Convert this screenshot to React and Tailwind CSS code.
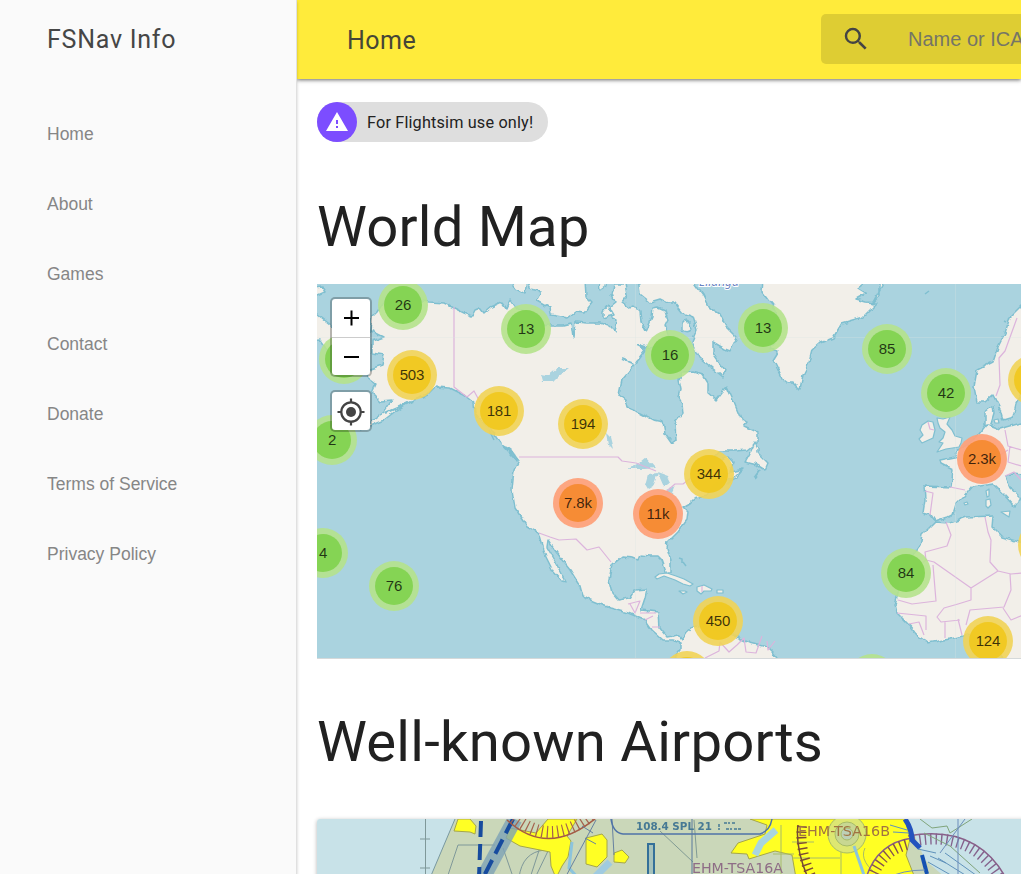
import React from "react";

const NAV = ["Home", "About", "Games", "Contact", "Donate", "Terms of Service", "Privacy Policy"];

const LAND = [
  // North America
  "M372 317 L377 312 L382 304 L400 298 L429 302 L444 303 L454 308 L464 313 L472 316 L475 310 L480 308 L484 313 L491 307 L502 302 L507 309 L511 300 L517 309 L530 314 L536 318 L542 326 L550 325 L563 325 L571 323 L573 338 L575 322 L587 323 L600 323 L611 327 L615 331 L617 320 L612 318 L610 306 L615 302 L612 294 L614 284 L625 284 L627 295 L622 302 L630 308 L634 306 L640 312 L641 322 L646 331 L652 317 L653 308 L658 307 L665 310 L668 320 L665 326 L670 340 L651 348 L640 345 L645 351 L633 367 L622 380 L619 395 L626 400 L628 408 L640 413 L653 420 L663 422 L665 433 L672 443 L676 440 L675 423 L683 413 L682 404 L678 397 L680 390 L678 380 L683 373 L693 372 L703 375 L708 383 L708 393 L716 400 L722 392 L727 387 L733 400 L740 417 L747 422 L744 426 L757 432 L757 442 L747 450 L735 451 L720 451 L708 466 L728 457 L733 462 L730 472 L744 469 L736 477 L727 480 L714 485 L707 495 L695 498 L690 503 L683 507 L688 512 L687 520 L678 532 L668 542 L667 548 L671 560 L671 574 L667 574 L662 560 L658 556 L650 556 L640 555 L638 560 L633 558 L622 557 L612 565 L609 580 L612 593 L618 600 L630 598 L635 590 L647 589 L645 598 L641 610 L658 612 L659 627 L667 637 L678 635 L682 640 L687 632 L693 627 L715 630 L737 637 L750 643 L767 647 L773 653 L780 662 L670 662 L680 650 L680 643 L672 640 L663 640 L652 630 L645 620 L628 613 L610 608 L583 597 L580 586 L570 570 L562 560 L554 549 L548 540 L547 547 L555 561 L560 571 L566 582 L562 581 L553 571 L548 561 L546 557 L539 533 L527 526 L515 508 L512 490 L514 470 L519 460 L510 450 L500 443 L490 428 L482 422 L475 413 L474 403 L464 395 L450 388 L435 387 L427 395 L414 400 L405 405 L397 410 L384 420 L360 430 L384 412 L392 400 L380 401 L372 393 L376 384 L367 377 L370 369 L382 365 L384 355 L372 353 L372 341 L384 337 L370 330Z",
  // Chukotka
  "M310 310 L317 314 L326 321 L336 329 L341 345 L327 350 L320 340 L310 341Z", "M314 288 L322 287 L325 292 L318 295 L314 294Z",
  // Greenland
  "M763 280 L762 292 L768 300 L776 310 L780 325 L775 340 L770 350 L778 352 L773 360 L783 380 L787 383 L794 383 L800 389 L803 375 L809 363 L812 350 L820 343 L833 338 L842 323 L863 317 L877 303 L866 302 L855 299 L866 293 L858 288 L868 280 L879 280 L879 296 L872 304 L885 280Z",
  // Baffin
  "M638 280 L640 294 L650 302 L660 299 L668 303 L675 303 L683 313 L693 317 L697 330 L692 342 L700 358 L712 368 L723 377 L725 370 L713 353 L713 342 L725 349 L730 351 L737 337 L727 327 L720 314 L709 307 L703 295 L692 280Z",
  "M682 323 q4 -6 8 0 l1 6 q-4 5 -9 1Z",
  // Victoria and neighbours
  "M527 280 L531 289 L541 291 L536 300 L550 308 L551 315 L567 318 L575 312 L583 313 L592 302 L586 296 L585 280Z",
  "M510 280 L516 289 L525 294 L527 280Z", "M603 311 L608 305 L614 315 L603 318Z", "M599 280 L600 290 L606 286 L607 280Z",
  // Newfoundland
  "M745 462 L750 453 L755 442 L758 448 L758 453 L768 463 L765 470 L757 465Z",
  "M734 477 L742 469 L737 478 L727 484Z",
  // Scandinavia and Denmark
  "M1023 304 L1010 317 L1005 333 L998 347 L993 362 L977 370 L974 387 L977 402 L985 402 L993 395 L1000 409 L1003 420 L1013 417 L1016 404 L1023 392Z",
  "M985 425 L985 412 L993 406 L994 414 L991 424Z",
  // Europe
  "M940 460 L955 457 L958 450 L968 443 L979 434 L987 424 L1000 429 L1021 423 L1025 423 L1025 475 L1011 474 L1005 476 L1010 487 L1021 497 L1015 507 L1003 494 L993 484 L980 486 L971 487 L964 496 L956 504 L953 514 L947 517 L935 521 L931 515 L923 513 L925 500 L924 486 L951 487 L953 470 L941 464Z",
  // Africa
  "M935 522 L950 523 L967 517 L993 516 L992 527 L1002 537 L1023 543 L1023 662 L1004 662 L1000 653 L985 640 L967 635 L950 639 L928 643 L917 635 L908 624 L897 613 L895 604 L898 594 L898 578 L908 562 L920 545 L922 535Z",
];

// Small islands are drawn with their own detailed outlines
const ISLANDS = [
  "M655 577 L659 574 L667 573 L676 576 L684 579 L693 584 L690 586 L683 584 L675 580 L664 576 L657 579Z",
  "M697 587 L704 585 L712 589 L711 591 L704 591 L701 594 L697 591Z",
  "M679 591 h6 l2 1 l-4 2Z", "M717 590 h6 v3 h-6Z",
  "M937 418 L943 419 L950 417 L947 424 L952 430 L955 436 L962 438 L961 443 L959 447 L946 449 L937 452 L943 443 L939 442 L943 438 L945 432 L940 428 L938 423Z",
  "M922 425 L928 421 L933 422 L935 430 L933 438 L922 443 L919 439 L923 435 L920 430Z",
  "M986 500 l4 -1 l1 6 l-3 3 l-2 -2Z", "M986 491 l3 -2 l0 7 l-2 1Z", "M1001 512 l9 -1 l-1 6Z", "M964 503 l3 -1 l1 2 l-3 1Z",
  "M994 420 l4 -1 l1 4 l-4 0Z",
];

const WATER = [
  "M628 469 L640 463 L646 458 L655 468 L645 469Z", "M648 474 L658 473 L653 487 L648 490 L645 485Z", "M657 472 L668 476 L671 482 L664 487 L660 478Z",
  "M663 492 L675 486 L672 493Z", "M606 433 L610 437 L613 449 L608 444Z", "M541 374 L548 375 L557 368 L569 368 L558 376 L553 381 L543 381Z", "M672 414 l4 0 l-1 7 l-3 -3Z",
];

const BORDERS =
  "M454 307 V387 L467 397 L474 391 L480 402 M519 457 H618 L622 461 L636 463 L656 471 M667 491 L675 484 L683 484 L692 477 M539 533 L550 537 L559 540 L576 539 L587 550 L599 547 L611 562 M628 604 L640 601 L635 613 L630 604 M640 613 L656 613 M645 620 L653 616 M652 627 L660 627 M705 658 L719 651 L720 642 L729 652 L737 645 L744 638 L746 652 L756 653 L762 636 M767 641 L768 650 L775 641 M946 522 L951 535 L947 546 L925 552 L926 560 L934 562 L971 588 L998 571 L1011 574 L1023 573 M933 565 L936 601 L912 604 L898 600 M926 560 L913 570 M985 517 L988 532 L991 540 L990 562 L998 571 M971 588 L971 600 L958 604 L944 608 L937 617 L941 622 L960 620 M1010 574 L1011 590 L1004 607 L970 610 L966 625 M945 622 L945 638 M958 619 L962 635 M897 613 L926 616 L926 630 M909 624 L919 622 L924 635 M1003 608 L1011 620 L1023 615 M950 487 L965 490 M925 491 L933 493 L930 515 M1017 318 L1005 351 L999 358 L1000 385 L996 396 M1005 430 L1008 446 L1021 450 M1000 455 L1008 450 M1010 446 L1008 462 L1021 466 M1005 476 L1014 472 L1021 480 M928 422 L930 429 L934 430 M702 586 V592";

const CLUSTERS = [
  [403, 305, "26", "g"], [526, 329, "13", "g"], [670, 355, "16", "g"], [763, 328, "13", "g"], [887, 349, "85", "g"], [946, 393, "42", "g"],
  [344, 359, "", "g"], [332, 440, "2", "g"], [323, 553, "4", "g"], [394, 586, "76", "g"], [906, 573, "84", "g"], [872, 679, "", "g"],
  [412, 375, "503", "y"], [499, 411, "181", "y"], [583, 424, "194", "y"], [709, 474, "344", "y"], [718, 621, "450", "y"],
  [687, 676, "", "y"], [988, 641, "124", "y"], [1033, 380, "", "y"], [1043, 545, "", "y"],
  [578, 503, "7.8k", "o"], [658, 514, "11k", "o"], [982, 459, "2.3k", "o"],
];

const TONES = {
  g: ["bg-[#b5e28c]/90", "bg-[#83d350]/95"],
  y: ["bg-[#f1d357]/90", "bg-[#f0c820]/95"],
  o: ["bg-[#fda17b]/95", "bg-[#f68a30]/95"],
};

function Cluster({ x, y, label, tone }) {
  const [ring, core] = TONES[tone];
  return (
    <div
      className={"absolute flex size-[50px] items-center justify-center rounded-full " + ring}
      style={{ left: x - 317 - 25, top: y - 284 - 25 }}
    >
      <div className={"flex size-[38px] items-center justify-center rounded-full font-['Liberation_Sans',sans-serif] text-[15px] tracking-[-0.1px] text-black/75 " + core}>{label}</div>
    </div>
  );
}

function WorldMap() {
  return (
    <div className="relative mt-[22px] h-[375px] w-[704px] overflow-hidden border-b border-[#d5d9da] bg-[#aad3df]">
      <svg viewBox="317 284 704 374" width="704" height="374" className="block">
        <defs>
          <filter id="coast" x="-5%" y="-5%" width="110%" height="110%" colorInterpolationFilters="sRGB">
            <feTurbulence type="fractalNoise" baseFrequency="0.13" numOctaves="2" seed="4" />
            <feDisplacementMap in="SourceGraphic" scale="5" xChannelSelector="R" yChannelSelector="G" />
          </filter>
        </defs>
        <g filter="url(#coast)">
          {LAND.map((d) => (
            <path key={d} d={d} fill="#f2efe9" stroke="#7fbfd0" strokeWidth="1.5" strokeLinejoin="round" />
          ))}
          {WATER.map((d) => (
            <path key={d} d={d} fill="#aad3df" />
          ))}
          <path d="M622 359 L634 364 M637 344 L647 349 M760 470 l-6 8 M385 413 l28 -12 M503 445 l14 15" stroke="#7fbfd0" strokeWidth="2" fill="none" />
        </g>
        {ISLANDS.map((d) => (
          <path key={d} d={d} fill="#f2efe9" stroke="#7fbfd0" strokeWidth="1.2" strokeLinejoin="round" />
        ))}
        <path d={BORDERS} fill="none" stroke="#dcb4dc" strokeWidth="1.2" strokeLinejoin="round" />
        <path d="M317 337.5 H1021 M635.5 284 V658 M955.5 284 V658" stroke="#d9e3e5" strokeOpacity=".3" fill="none" />
        <path d="M679 558l3 1v4M683 562l3 4M925 294l4 -3M1004 321l2 1M503 446l8 4 7 10M489 430l5 10" stroke="#7fbfd0" strokeWidth="1.5" fill="none" />
        <text x="699" y="286" fontFamily="Noto Sans" fontSize="12" fontStyle="italic" fill="#6b84c2" stroke="#fff" strokeWidth="2" paintOrder="stroke">Ellanga</text>
      </svg>
      {CLUSTERS.map(([x, y, label, tone]) => (
        <Cluster key={x + "-" + y} x={x} y={y} label={label} tone={tone} />
      ))}
      <div className="absolute left-[13px] top-[13px] flex w-[42px] flex-col overflow-hidden rounded-[5px] border-2 border-black/25 bg-white bg-clip-padding">
        <button className="flex h-[39px] items-center justify-center border-b border-[#ccc] pl-px" aria-label="Zoom in">
          <svg width="15" height="16" viewBox="0 0 15 16"><path d="M0 8H15M7.500 0.500V15.500" stroke="#000" strokeWidth="2" /></svg>
        </button>
        <button className="flex h-[37px] items-center justify-center pl-px" aria-label="Zoom out">
          <svg width="15" height="16" viewBox="0 0 15 16"><path d="M0 8H15" stroke="#000" strokeWidth="2" /></svg>
        </button>
      </div>
      <button className="absolute left-[13px] top-[106px] flex h-[42px] w-[42px] items-center justify-center rounded-[5px] border-2 border-black/25 bg-white bg-clip-padding pr-px pt-px" aria-label="Locate">
        <svg width="28" height="28" viewBox="0 0 28 28" fill="none" stroke="#444" strokeWidth="2.200">
          <circle cx="14" cy="14" r="9.700" /><circle cx="14" cy="14" r="5" fill="#444" stroke="none" />
          <path d="M14 0.500V5M14 23V27.500M0.500 14H5M23 14H27.500" />
        </svg>
      </button>
    </div>
  );
}

function AirportChart() {
  return (
    <div className="mt-[46px] h-[220px] w-[760px] overflow-hidden rounded-[3px] shadow-[0_1px_4px_rgba(0,0,0,0.3)]">
      <svg viewBox="317 819 760 220" width="760" height="220" className="block blur-[0.5px]">
        <rect x="317" y="819" width="760" height="220" fill="#cad7b9" />
        <path d="M317 819H455L430 878H317Z M908 819H1077V890H960L925 860Z" fill="#c8e2e8" />
        <path d="M455 819 L430 878" stroke="#7898a0" fill="none" />
        <path d="M425.500 819V878 M420 839h10 M420 868h10 M447 878L458 845H495 M503 848L512 874 M519 878Q522 852 545 850 M549 820L530 878 M562 822L535 878" stroke="#7f9899" fill="none" />
        <g fill="#ffff24" stroke="#a5a64a" strokeWidth="1">
          <path d="M458 819 L454 831 L470 832 L475 834 L476 826 L470 819Z" />
          <path d="M510 828 L506 838 L520 846 L550 852 L551 866 L556 878 L562 866 L568 857 L571 841 L567 836 L577 819 H548 L536 833Z" />
          <path d="M586 838 L602 834 L607 840 L607 857 L597 867 L586 864Z" />
          <path d="M614 853 L622 850 L629 857 L625 863 L614 862Z" />
          <path d="M750 819 L767 825 L765 834 L738 843 L731 853 L747 854 L749 859 L775 851 L792 855 L796 878 H915 L906 855 L910 839 L905 819Z" />
        </g>
        <g fill="none" stroke="#a7bc68">
          <circle cx="847" cy="834" r="19" fill="#dde772" /><circle cx="847" cy="834" r="12" fill="#c8d792" /><circle cx="847" cy="834" r="6" fill="#bdd0b7" />
          <path d="M865 848 Q858 862 882 878 M792 842 H814 M792 858 H840 M841 852V878 M781 825V878 M773 854H794" />
          <path d="M694 820 L697 858 M660 831 L693 862" stroke="#819b94" />
        </g>
        <g stroke="#8cc4dc" strokeWidth="7" fill="none">
          <path d="M755 855 L761 843 L776 830" stroke="#a9d5df" /><path d="M610 862 L594 878" stroke="#a0cbe0" /><path d="M572 842 L569 868 L578 878" strokeWidth="3" /><path d="M854 846 L865 878" strokeWidth="3" />
        </g>
        <path d="M515 819 L483 878" stroke="#7fa3b6" strokeWidth="15" opacity=".8" />
        <path d="M481 821 L479 878 M513 819 L483 878" stroke="#164b9e" strokeWidth="4" strokeDasharray="16 7" fill="none" />
        <path d="M507 820 Q548 858 596 818" fill="none" stroke="#a45a45" strokeWidth="1.500" />
        <path d="M510 814 Q550 850 593 814" fill="none" stroke="#a4624e" strokeWidth="12" strokeDasharray="1.200 4" />
        <path d="M596 820 L565 878 M612 819 L614 855 M582 826 L593 833 M585 838 L596 844" stroke="#6681a0" fill="none" />
        <path d="M611 819 Q613 833 623 834 H760 Q770 831 772 819" fill="none" stroke="#4f73a8" strokeWidth="1.500" />
        <path d="M648 878V844H654V878" fill="#a6c2bb" stroke="#347099" strokeWidth="2" />
        <path d="M692 819V878" stroke="#58789d" />
        <path d="M798 825 Q795 848 808 878" fill="none" stroke="#714836" strokeWidth="1.500" />
        <path d="M802 826 Q799 850 812 878" fill="none" stroke="#7c4a35" strokeWidth="10" strokeDasharray="1.500 4" />
        <path d="M866 878 Q877 843 912 838 M908 836 Q976 824 1006 878" fill="none" stroke="#895e88" strokeWidth="1.500" />
        <path d="M872 878 Q882 850 909 844" fill="none" stroke="#85534d" strokeWidth="11" strokeDasharray="1.400 4" />
        <path d="M914 841 Q971 830 1000 878" fill="none" stroke="#85638d" strokeWidth="11" strokeDasharray="1.400 4" />
        <path d="M905 819 Q912 829 912 840 L920 848" fill="none" stroke="#2353be" strokeWidth="5" />
        <path d="M922 855 L927 874" fill="none" stroke="#1552b2" strokeWidth="4" />
        <path d="M890 825l17 5M893 832l16 1M918 849l18 4M930 856l16 7M928 862l28 16M938 858l32 20M945 853l35 25" stroke="#6092bb" fill="none" />
        <path d="M920 819 L932 828 L947 826 L950 833 L972 819 M924 833L950 846L980 873" fill="none" stroke="#80a47b" />
        <path d="M958 819V878 M965 819L940 853 M888 878 Q902 870 925 870" fill="none" stroke="#6c8ebb" />
        <g fontFamily="DejaVu Sans, sans-serif">
          <text x="636" y="830" fontSize="11" fontWeight="700" fill="#467994" textLength="76" lengthAdjust="spacingAndGlyphs">108.4 SPL 21</text>
          <path d="M719 824v6M724 823h6M726 829h6M732 823h4M734 829h7" stroke="#467994" strokeWidth="1.500" strokeDasharray="3 1" />
          <text x="798" y="836" fontSize="14" fill="#a17342" textLength="92" lengthAdjust="spacingAndGlyphs">EHM-TSA16B</text>
          <text x="692" y="873" fontSize="14" fill="#8e6d86" textLength="91" lengthAdjust="spacingAndGlyphs">EHM-TSA16A</text>
        </g>
      </svg>
    </div>
  );
}

export default function App() {
  return (
    <div className="flex h-[874px] w-full overflow-hidden bg-white font-['Roboto',sans-serif]">
      <aside className="z-20 flex w-[297px] shrink-0 flex-col border-r border-[#e0e0e0] bg-[#fafafa] shadow-[0_2px_3px_rgba(0,0,0,0.2)]">
        <div className="flex h-20 items-center pl-[47px] text-[25px] tracking-[0.75px] text-[#464646]">FSNav Info</div>
        <nav className="mt-[19px] flex flex-col font-['Liberation_Sans',sans-serif] text-[17.5px] text-[#868686]">
          {NAV.map((item) => (
            <a key={item} className="flex h-[70px] items-center pl-[47px]">{item}</a>
          ))}
        </nav>
      </aside>
      <div className="flex min-w-0 flex-1 flex-col">
        <header className="z-10 flex h-[79px] shrink-0 items-center justify-between overflow-visible bg-[#ffeb3b] shadow-[0_1px_4px_rgba(0,0,0,0.6)]">
          <h2 className="mt-[3px] pl-[50px] text-[25px] tracking-[0.5px] text-[#464636]">Home</h2>
          <div className="-mt-px flex h-[50px] w-[200px] items-center overflow-hidden rounded-l-[5px] bg-[#decd33]">
            <svg viewBox="0 0 24 24" className="ml-5 size-[30px] shrink-0" fill="#444">
              <path d="M15.500 14h-.79l-.28-.27A6.471 6.471 0 0 0 16 9.500 6.500 6.500 0 1 0 9.500 16c1.610 0 3.090-.59 4.230-1.570l.27.28v.79l5 4.990L20.490 19l-4.990-5zm-6 0C7.010 14 5 11.990 5 9.500S7.010 5 9.500 5 14 7.010 14 9.500 11.990 14 9.500 14z" />
            </svg>
            <span className="ml-[37px] whitespace-nowrap font-['Liberation_Sans',sans-serif] text-[20px] text-[#757566]">Name or ICAO</span>
          </div>
        </header>
        <main className="flex flex-col items-start pl-5 pt-[23px]">
          <div className="flex h-10 w-[231px] items-center rounded-full bg-[#dedede]">
            <span className="flex size-10 items-center justify-center rounded-full bg-[#7c4dff]">
              <svg viewBox="0 0 24 24" className="size-6" fill="#fff"><path d="M1 21h22L12 2 1 21zm12-3h-2v-2h2v2zm0-4h-2v-4h2v4z" /></svg>
            </span>
            <span className="ml-2.5 mt-0.5 whitespace-nowrap text-[16.25px] tracking-[0.16px] text-[#222]">For Flightsim use only!</span>
          </div>
          <h1 className="mt-[50px] h-[70px] whitespace-nowrap text-[56.25px] leading-[70px] tracking-[0.2px] text-[#212121]">World Map</h1>
          <WorldMap />
          <h1 className="mt-[48px] h-[66px] whitespace-nowrap text-[56.25px] leading-[70px] tracking-[0.23px] text-[#212121]">Well-known Airports</h1>
          <AirportChart />
        </main>
      </div>
    </div>
  );
}
